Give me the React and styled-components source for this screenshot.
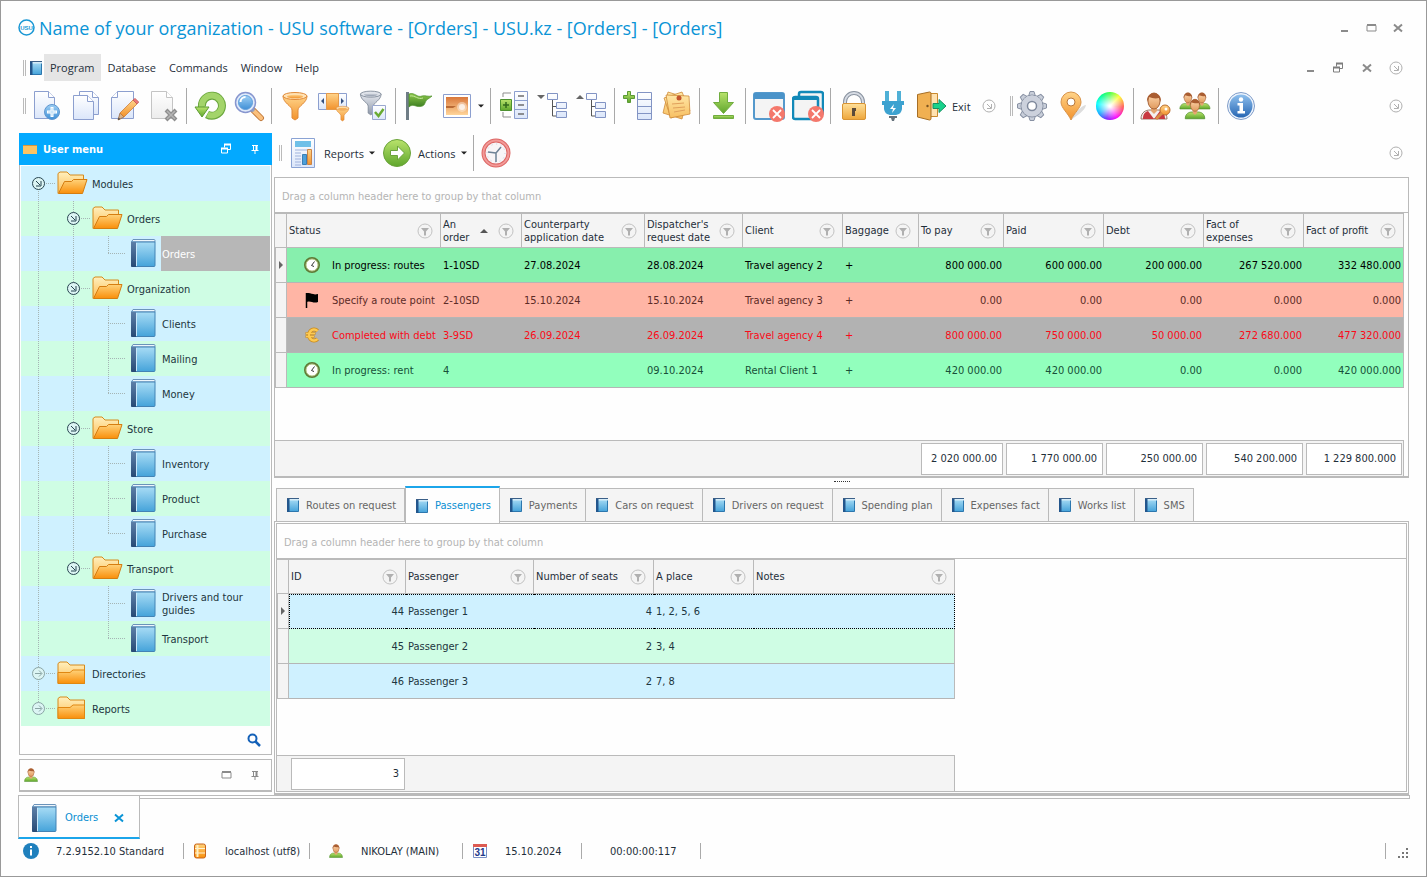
import { Fragment, useState } from "react";
import styled, { createGlobalStyle } from "styled-components";

const GlobalStyle = createGlobalStyle`
  *, *::before, *::after {
    box-sizing: border-box;
  }

  body {
    margin: 0;
    background: #fefefe;
    color: #1f2f3a;
    font-family: "DejaVu Sans Condensed", "DejaVu Sans", sans-serif;
    font-size: 11px;
    line-height: 13px;
  }

  button, input {
    margin: 0;
    padding: 0;
    border: 0;
    background: none;
    color: inherit;
    font: inherit;
  }

  svg {
    display: block;
    flex: none;
  }
`;

const uiFont = `"Open Sans", "Noto Sans", sans-serif`;
const line = "#bababa";

/* ---------- icons ---------- */

const GradientSheet = styled.svg`
  position: absolute;
  width: 0;
  height: 0;
`;

const gradients = {
  page: ["#ffffff", "#dbe6fa"],
  grayPage: ["#ffffff", "#ececec"],
  blue: ["#9fd0f5", "#3f8fd6"],
  book: ["#a8dcf5", "#45a3da"],
  spine: ["#5c7fa8", "#274a75"],
  green: ["#b9e36c", "#5fa62c"],
  darkGreen: ["#8fca4a", "#3c7d22"],
  orange: ["#ffd48a", "#f2922c"],
  folder: ["#ffd27a", "#f98f0a"],
  folderBack: ["#fff0bd", "#fdbd55"],
  gold: ["#ffe09a", "#eea63a"],
  note: ["#ffe6a5", "#f7bf62"],
  steel: ["#e6e9ef", "#8d97a8"],
  sunset: ["#d9773a", "#ffd59a"],
  skin: ["#ffd9b0", "#e09a5e"],
  info: ["#8fc0ee", "#2766b3"],
};

const Gradients = () => (
  <GradientSheet aria-hidden="true">
    <defs>
      {Object.entries(gradients).map(([id, [from, to]]) => (
        <linearGradient key={id} id={id} x1="0" y1="0" x2="0" y2="1">
          <stop offset="0" stopColor={from} />
          <stop offset="1" stopColor={to} />
        </linearGradient>
      ))}
    </defs>
  </GradientSheet>
);

const Icon = ({ size = 32, box = 32, children }) => (
  <svg
    width={size}
    height={size}
    viewBox={`0 0 ${box} ${box}`}
    fill="none"
    aria-hidden="true"
  >
    {children}
  </svg>
);

const IconNew = () => (
  <Icon>
    <path d="M3.500 1.500h14l6 6v21h-20z" fill="url(#page)" stroke="#8c9fcf" />
    <path d="M17.500 1.500v6h6" fill="#fff" stroke="#8c9fcf" />
    <circle cx="21" cy="22" r="7.500" fill="url(#blue)" stroke="#5f97d0" />
    <path d="M21 17v10M16 22h10" stroke="#fff" strokeWidth="3" />
    <path d="M21 18v8M17 22h8" stroke="#b8dcf6" strokeWidth="1" />
  </Icon>
);

const IconCopy = () => (
  <Icon>
    <path d="M9.500 1.500h13l6 6v17h-19z" fill="url(#page)" stroke="#8c9fcf" />
    <path d="M22.500 1.500v6h6" fill="#fff" stroke="#8c9fcf" />
    <path d="M3.500 5.500h14l6 6v18h-20z" fill="url(#page)" stroke="#8c9fcf" />
    <path d="M17.500 5.500v6h6" fill="#fff" stroke="#8c9fcf" />
  </Icon>
);

const IconEdit = () => (
  <Icon>
    <path d="M8.500 1.500h16v27h-22v-21z" fill="url(#page)" stroke="#8c9fcf" />
    <path d="M8.500 1.500v6h-6" fill="#fff" stroke="#8c9fcf" />
    <path d="M9 30l2-7 4 4z" fill="#d9b48a" stroke="#8d5a35" strokeWidth=".7" />
    <path d="M11 23l13-13 4 4-13 13z" fill="url(#orange)" stroke="#c8742c" strokeWidth=".7" />
    <path d="M24 10l2-1.600 3.800 3.600-1.800 2z" fill="#e77" stroke="#b55" strokeWidth=".7" />
    <path d="M9 30l.7-2.500 1.700 1.700z" fill="#444" />
  </Icon>
);

const IconDelete = () => (
  <Icon>
    <path d="M3.500 1.500h15l6 6v21h-21z" fill="url(#grayPage)" stroke="#c4c4c4" />
    <path d="M18.500 1.500v6h6" fill="#fff" stroke="#c4c4c4" />
    <path d="M18 20l10 10M28 20l-10 10" stroke="#8e8e8e" strokeWidth="4" />
    <path d="M19 21l8 8M27 21l-8 8" stroke="#b5b5b5" strokeWidth="1.500" />
  </Icon>
);

const IconRefresh = () => (
  <Icon>
    <path d="M8 17a10 10 0 1 1 5 7.500" stroke="#6aa63d" strokeWidth="8" />
    <path d="M8 17a10 10 0 1 1 5.500 7.500" stroke="#a3d46a" strokeWidth="6" />
    <path d="M1 17h14l-7 10z" fill="url(#green)" stroke="#5d9c33" />
  </Icon>
);

const IconSearch = () => (
  <Icon>
    <path d="M19 19l9 9" stroke="#c27b3c" strokeWidth="6" strokeLinecap="round" />
    <path d="M21 21l7 7" stroke="#fbc07c" strokeWidth="4" strokeLinecap="round" />
    <path d="M18 18l3 3" stroke="#999fb5" strokeWidth="4" />
    <circle cx="12.500" cy="12.500" r="10" fill="#dfeafa" stroke="#8796cf" strokeWidth="1.500" />
    <circle cx="12.500" cy="12.500" r="7" fill="url(#blue)" stroke="#5f9ddb" />
    <path d="M7.500 12a5 5 0 0 1 5-5" stroke="#fff" strokeWidth="2" />
  </Icon>
);

const Funnel = ({ fill, stroke, top }) => (
  <>
    <path d="M4 6c0 7 9 10 9 14v8l3 2 3-2v-8c0-4 9-7 9-14z" fill={fill} stroke={stroke} />
    <ellipse cx="16" cy="6" rx="12" ry="3.500" fill={top} stroke={stroke} />
    <ellipse cx="16" cy="6.500" rx="8" ry="1.800" fill={fill} />
  </>
);

const IconFunnel = () => (
  <Icon>
    <Funnel fill="url(#orange)" stroke="#e08a3a" top="#ffe2b5" />
  </Icon>
);

const IconColumnFilter = () => (
  <Icon>
    <path d="M.5 3.500h28v16h-28z" fill="url(#page)" stroke="#8c9fcf" />
    <path d="M8.500 3.500h12v16h-12z" fill="url(#orange)" stroke="#e59a4a" />
    <path d="M6 8v6l-3-3zM23 8v6l3-3z" fill="#35507f" />
    <g transform="translate(16 15) scale(.53)">
      <Funnel fill="url(#orange)" stroke="#d9822f" top="#ffe2b5" />
    </g>
  </Icon>
);

const IconFunnelCheck = () => (
  <Icon>
    <g transform="translate(0 -1) scale(.86)">
      <Funnel fill="url(#steel)" stroke="#7d8796" top="#dfe3ea" />
    </g>
    <path d="M15.500 15.500h13v14h-13z" fill="url(#page)" stroke="#9aa8cf" />
    <path d="M18 22l3.500 4 5-7" stroke="#69ab32" strokeWidth="2.500" />
  </Icon>
);

const IconFlag = () => (
  <Icon>
    <path d="M3 2h3v28h-3z" fill="#6f7d86" />
    <path d="M6 4c6-2 8 4 13 2 3-1 6 1 10 0-3 3-6 3-7 7-1 4-6 4-9 3-3-1-5-1-7 1z" fill="url(#darkGreen)" stroke="#4c8f2a" strokeWidth=".7" />
    <path d="M7 6c5-1 8 4 13 2" stroke="#c3e79a" />
  </Icon>
);

const IconPicture = () => (
  <Icon>
    <path d="M2.500 4.500h27v23h-27z" fill="#fff" stroke="#8c9fcf" />
    <path d="M5 7h22v18h-22z" fill="url(#sunset)" />
    <circle cx="21" cy="17" r="5" fill="#fff" opacity=".4" />
    <circle cx="21" cy="17" r="3" fill="#fff" opacity=".7" />
    <path d="M5 16h10l-3 2h-7z" fill="#a24d1b" opacity=".7" />
  </Icon>
);

const IconExpandList = () => (
  <Icon>
    <path d="M5 7v-4h8M5 22v5h8" stroke="#8d8d8d" />
    <path d="M16.500 1.500h13v27h-13zM16.500 10.500h13M16.500 19.500h13" fill="url(#page)" stroke="#8c9fcf" />
    <path d="M20 6h6M20 15h6M20 24h6" stroke="#6e6e6e" strokeWidth="1.500" />
    <path d="M2.500 9.500h11v11h-11z" fill="url(#green)" stroke="#4d9130" />
    <path d="M8 12v6M5 15h6" stroke="#32691c" strokeWidth="1.500" />
  </Icon>
);

const TreeBoxes = () => (
  <>
    <path d="M15.500 10v16h5M15.500 16.500h5" stroke="#555" />
    <path d="M10.500 3.500h10v6h-10zM19.500 12.500h10v6h-10zM19.500 21.500h10v6h-10z" fill="url(#page)" stroke="#8294c4" />
  </>
);

const IconTreeCollapse = () => (
  <Icon>
    <path d="M0 5h8l-4 4z" fill="#666" />
    <TreeBoxes />
  </Icon>
);

const IconTreeExpand = () => (
  <Icon>
    <path d="M0 9h8l-4-4z" fill="#666" />
    <TreeBoxes />
  </Icon>
);

const IconAddRows = () => (
  <Icon>
    <path d="M15.500 2.500h14v27h-14zM15.500 9.500h14M15.500 16.500h14M15.500 23.500h14" fill="url(#page)" stroke="#8294c4" />
    <path d="M5.500 1.500h3v4h4v3h-4v4h-3v-4h-4v-3h4z" fill="url(#green)" stroke="#5a9a35" />
  </Icon>
);

const IconNotes = () => (
  <Icon>
    <path d="M7 2l19 6-5 21-19-6z" fill="url(#note)" stroke="#cf8b3a" strokeWidth=".8" />
    <path d="M3 8l18-6 8 19-19 7z" fill="url(#note)" stroke="#cf8b3a" strokeWidth=".8" />
    <path d="M5 5l23 1 1 18-20 4z" fill="url(#note)" stroke="#cf8b3a" strokeWidth=".8" />
    <path d="M11 14l12-1M12 18l12-1M13 22l11-2" stroke="#e0a05c" />
    <circle cx="18" cy="8" r="2.500" fill="#c4532b" />
  </Icon>
);

const IconDownload = () => (
  <Icon>
    <path d="M12.500 2.500h8v10h6l-10 11-10-11h6z" fill="url(#green)" stroke="#71ad3f" />
    <path d="M6.500 25.500h20v3h-20z" fill="url(#green)" stroke="#71ad3f" />
  </Icon>
);

const CloseBadge = () => (
  <>
    <circle cx="24" cy="24" r="8" fill="#f4786c" />
    <path d="M20 20l8 8M28 20l-8 8" stroke="#fff" strokeWidth="1.800" />
  </>
);

const IconCloseWindow = () => (
  <Icon>
    <rect x="1" y="3" width="30" height="26" rx="2" fill="#f4f4f4" stroke="#5599cc" strokeWidth="2" />
    <path d="M1 3h30v6h-30z" fill="#4a93c9" />
    <CloseBadge />
  </Icon>
);

const IconCloseAll = () => (
  <Icon>
    <rect x="7" y="2" width="24" height="22" rx="2" fill="#f4f4f4" stroke="#1289b8" strokeWidth="2.500" />
    <rect x="1" y="7" width="25" height="22" rx="2" fill="#f4f4f4" stroke="#1289b8" strokeWidth="2.500" />
    <path d="M1 7h25v3h-25z" fill="#1289b8" />
    <CloseBadge />
  </Icon>
);

const IconLock = () => (
  <Icon>
    <path d="M7 16v-4a9 9 0 0 1 18 0v4" stroke="#8a93a0" strokeWidth="4" />
    <path d="M7 16v-4a9 9 0 0 1 18 0v4" stroke="#d7dce4" strokeWidth="2" />
    <rect x="4.500" y="13.500" width="23" height="16" rx="1.500" fill="url(#gold)" stroke="#d89434" />
    <path d="M14 18h4v3h-1v5h-3v-5z" fill="#5b4a3a" />
  </Icon>
);

const IconPlug = () => (
  <Icon>
    <path d="M10 1v10M22 1v10" stroke="#4fb0d6" strokeWidth="4" />
    <path d="M5 11h22v4h-2v4a7 7 0 0 1-6 6h-6a7 7 0 0 1-6-6v-4h-2z" fill="#3da2d0" />
    <path d="M17 14l-4 5h3l-1 4 4-5h-3z" fill="#fff" />
    <path d="M12 26h8v2h-2l-1 3h-2l-1-3h-2z" fill="#66727c" />
  </Icon>
);

const IconExit = () => (
  <Icon>
    <path d="M13.500 3.500h9v23h-9z" fill="#ffe2b0" stroke="#c98a2e" />
    <path d="M2.500 4.500l12-2.500q1.500 0 1.500 1.500v25q0 1.500-1.500 1.500l-12-3z" fill="#f0b052" stroke="#a66e25" />
    <circle cx="12.500" cy="16" r="1.200" fill="#7a5320" />
    <path d="M18 13.500h6v-4l7 6.500-7 6.500v-4h-6z" fill="#18d28c" stroke="#178f62" />
  </Icon>
);

const gearTeeth = [0, 45, 90, 135, 180, 225, 270, 315];

const IconGear = () => (
  <Icon>
    {gearTeeth.map((angle) => (
      <path
        key={angle}
        d="M12.500 6.500l1.500-5h4l1.500 5z"
        fill="#c9cfda"
        stroke="#8891a3"
        transform={`rotate(${angle} 16 16)`}
      />
    ))}
    <circle cx="16" cy="16" r="11" fill="url(#steel)" stroke="#8891a3" />
    <circle cx="16" cy="16" r="10.500" fill="#ccd1dc" />
    <circle cx="16" cy="16" r="4.500" fill="#fff" stroke="#7f899c" strokeWidth="1.500" />
  </Icon>
);

const IconPin = () => (
  <Icon>
    <path d="M16 30c6-5 14-9 15-15-3 0-10 6-15 15z" fill="#ddd" />
    <path d="M16 30c-3-7-10-12-10-18a10 10 0 0 1 20 0c0 6-7 11-10 18z" fill="url(#orange)" stroke="#d8934a" />
    <circle cx="16" cy="12" r="4" fill="#fff" stroke="#b9793c" />
  </Icon>
);

const Person = ({ body = "url(#green)", line: stroke = "#4f8f2c" }) => (
  <>
    <path d="M3 29c0-7 5-9 9-9h8c4 0 9 2 9 9z" fill={body} stroke={stroke} />
    <path d="M13 16h6v5l-3 3-3-3z" fill="#e5a671" />
    <ellipse cx="16" cy="11" rx="6" ry="8" fill="url(#skin)" stroke="#a8653a" />
    <path d="M9 12c-1-12 15-12 14 0l-2-4c-4 1-7 0-10-1z" fill="#a95d31" />
  </>
);

const IconUserKey = () => (
  <Icon>
    <g transform="translate(-2 0)">
      <Person body="#f4f0ee" line="#9a7a6a" />
      <path d="M5 29c0-5 2-7 5-8l6 8zM27 29c0-5-2-7-5-8l-6 8z" fill="#c8393f" />
    </g>
    <circle cx="25" cy="20" r="5" fill="url(#orange)" stroke="#b96c2c" />
    <circle cx="26" cy="19" r="1.500" fill="#fff" />
    <path d="M22 23l-6 6" stroke="#d98d45" strokeWidth="3" />
  </Icon>
);

const IconUsers = () => (
  <Icon>
    <g transform="translate(-1 1) scale(.62)">
      <Person />
    </g>
    <g transform="translate(13 1) scale(.62)">
      <Person />
    </g>
    <g transform="translate(4 7) scale(.75)">
      <Person />
    </g>
  </Icon>
);

const IconInfo = () => (
  <Icon>
    <circle cx="16" cy="16" r="13.500" fill="#eef4fc" stroke="#7e9cc9" />
    <circle cx="16" cy="16" r="11.500" fill="url(#info)" />
    <circle cx="16" cy="9.500" r="2.200" fill="#fff" />
    <path d="M12.500 13h5.500v8h2v2.500h-7.500v-2.500h2v-5.500h-2z" fill="#fff" />
  </Icon>
);

const IconReport = () => (
  <Icon>
    <path d="M4.500 1.500h23v29h-23z" fill="url(#page)" stroke="#8aa3d4" />
    <path d="M8 4h16v6h-16z" fill="#6fc0e8" />
    <path d="M8 13h16M8 16h6M8 19h6M8 22h6M8 25h6M8 28h6" stroke="#9fb2dc" />
    <path d="M15.500 17.500h4v10h-4z" fill="#4d9fd8" stroke="#3b7fb5" />
    <path d="M20.500 12.500h4v15h-4z" fill="url(#orange)" stroke="#cc8444" />
  </Icon>
);

const IconAction = () => (
  <Icon>
    <circle cx="16" cy="16" r="13.500" fill="url(#green)" stroke="#6ba33b" />
    <path d="M9.500 13.500h7v-4.500l7 7-7 7v-4.500h-7z" fill="#fff" stroke="#6ba33b" />
  </Icon>
);

const IconAlarm = () => (
  <Icon>
    <circle cx="16" cy="16" r="12.500" fill="#f8f5f7" stroke="#dc6664" strokeWidth="4" />
    <circle cx="16" cy="16" r="12.500" stroke="#f29a98" strokeWidth="2" />
    <circle cx="16" cy="16" r="9" stroke="#c5cddd" strokeDasharray="1 3.700" />
    <path d="M16 16l5-6M16 16v9M16 16l-8-1" stroke="#6e8296" strokeWidth="1.500" />
  </Icon>
);

const IconBook = () => (
  <Icon size={28} box={28}>
    <path d="M2.500 3l1.500-2.500h21q1 0 1 1v1.500z" fill="#eef6fc" stroke="#6b93ba" />
    <path d="M2.500 3h23.500v23.500q0 1-1 1h-21.500q-1 0-1-1z" fill="url(#book)" stroke="#4383b5" />
    <path d="M2 3h5v25h-4q-1 0-1-1z" fill="url(#spine)" />
    <path d="M7.500 4v23" stroke="#c8e8fa" />
  </Icon>
);

const IconSmallBook = () => (
  <Icon size={14} box={14}>
    <path d="M1.500 1h11v12.500h-11z" fill="url(#book)" stroke="#2c77ae" />
    <path d="M1 1h12v1.500h-12z" fill="#d5ecf8" />
    <path d="M1 .5h2.500v13.500h-2.500z" fill="#23568c" />
    <path d="M1 .5h12" stroke="#3a5f88" />
  </Icon>
);

const IconFolder = ({ open }) => (
  <svg width="31" height="24" viewBox="0 0 31 24" fill="none" aria-hidden="true">
    {open ? (
      <>
        <path d="M1 22.500v-20l2-1.500h7l3 3h13.500v7" fill="url(#folderBack)" stroke="#d58a1c" />
        <path d="M1.500 22.500l6-12h7l2-2h13.500l-4.500 14z" fill="url(#folder)" stroke="#d57d10" />
      </>
    ) : (
      <>
        <path d="M1 22.500v-20l2-1.500h7l3 3h14.500v18.500z" fill="url(#folderBack)" stroke="#d58a1c" />
        <path d="M1 22.500v-11l12 0 3-2.500h11.500v13.500z" fill="url(#folder)" stroke="#e08712" />
      </>
    )}
  </svg>
);

const IconCircleArrow = ({ color = "#b0b0b0" }) => (
  <Icon size={14} box={14}>
    <circle cx="7" cy="7" r="6" stroke={color} />
    <path d="M5 5l4 4M9.500 5v4.500h-4.500" stroke={color} />
  </Icon>
);

const IconFilter = () => (
  <Icon size={16} box={16}>
    <circle cx="8" cy="8" r="7" stroke="#c2c2c2" />
    <path d="M4 5h8l-3 3.500v4h-2v-4z" fill="#b0b0b0" />
  </Icon>
);

const IconMinimize = () => (
  <Icon size={12} box={12}>
    <path d="M3 9h7" stroke="#8b8b8b" strokeWidth="2" />
  </Icon>
);

const IconMaximize = () => (
  <Icon size={12} box={12}>
    <path d="M2 3.500h9v5.500h-9z" stroke="#8b8b8b" />
    <path d="M2 3h9" stroke="#8b8b8b" strokeWidth="2" />
  </Icon>
);

const IconRestore = ({ color = "#7d7d7d" }) => (
  <Icon size={12} box={12}>
    <path d="M4.500 4.500v-3h6v5h-3M1.500 5.500h6v4.500h-6z" stroke={color} />
    <path d="M4 1.500h7M1 5.500h7" stroke={color} strokeWidth="2" />
  </Icon>
);

const IconClose = ({ color = "#8b8b8b" }) => (
  <Icon size={12} box={12}>
    <path d="M2 2.500l8 7M10 2.500l-8 7" stroke={color} strokeWidth="2" />
  </Icon>
);

const IconPushpin = ({ color = "#8b8b8b" }) => (
  <Icon size={12} box={12}>
    <path d="M3 2.500h6M2.500 7.500h7M6 8v3M4.500 3v4" stroke={color} />
    <path d="M7.500 2.500v5" stroke={color} strokeWidth="2" />
  </Icon>
);

const IconCaret = () => (
  <Icon size={6} box={6}>
    <path d="M0 1.500h6l-3 3z" fill="#222" />
  </Icon>
);

const IconClockStatus = () => (
  <Icon size={16} box={16}>
    <circle cx="8" cy="8" r="7" fill="#fff" stroke="#5f7a36" strokeWidth="2" />
    <circle cx="8" cy="8" r="6" stroke="#b4c987" />
    <path d="M10.500 4.500l-3 4 2.500 1" stroke="#333" />
  </Icon>
);

const IconFlagStatus = () => (
  <Icon size={16} box={16}>
    <path d="M2.500 1v15" stroke="#000" strokeWidth="1.500" />
    <path d="M2 1.500c5-1.500 6 2 12 .5v8c-5 2-7-2-12 0z" fill="#000" />
  </Icon>
);

const IconEuroStatus = () => (
  <Icon size={16} box={16}>
    <path d="M13.500 4a5 5.500 0 1 0 0 8" stroke="#c98a1c" strokeWidth="4" />
    <path d="M1.500 6.500h10M1.500 9.500h9" stroke="#c98a1c" strokeWidth="2.500" />
    <path d="M13.500 4a5 5.500 0 1 0 0 8" stroke="#fdca52" strokeWidth="2.500" />
    <path d="M2 6.500h9M2 9.500h8" stroke="#fdca52" strokeWidth="1.500" />
  </Icon>
);

const IconPerson = () => (
  <Icon size={16}>
    <Person />
  </Icon>
);

const IconDatabase = () => (
  <Icon size={16} box={16}>
    <rect x="2.500" y="1" width="11" height="14" rx="2" fill="url(#folder)" stroke="#c8641c" />
    <path d="M3 5.500h10M3 10h10" stroke="#fff3d8" />
    <path d="M5.500 2v12" stroke="#fff0c4" strokeWidth="2" />
  </Icon>
);

const IconCalendar = () => (
  <Icon size={16} box={16}>
    <path d="M1.500 1.500h13v13h-13z" fill="#fff" stroke="#7a8fc4" />
    <path d="M1 1h14v3h-14z" fill="#dd5b52" />
    <text x="8" y="13" textAnchor="middle" fontFamily="Liberation Sans" fontSize="10" fontWeight="700" fill="#23398a">
      31
    </text>
  </Icon>
);

const IconInfoDot = () => (
  <Icon size={16} box={16}>
    <circle cx="8" cy="8" r="8" fill="#1f80bd" />
    <path d="M8 3v2M8 6.500v6" stroke="#fff" strokeWidth="2" />
  </Icon>
);

const IconFind = () => (
  <Icon size={14} box={14}>
    <circle cx="5.500" cy="5.500" r="4" stroke="#1461b8" strokeWidth="2" />
    <path d="M8.500 8.500l4.500 4.500" stroke="#1461b8" strokeWidth="2.500" />
  </Icon>
);

const Logo = () => (
  <Icon size={17} box={17}>
    <circle cx="8.500" cy="8.500" r="7.500" stroke="#1a97d4" strokeWidth="1.500" />
    <text x="8.500" y="11" textAnchor="middle" fontFamily="Liberation Sans" fontSize="6" fontWeight="700" fill="#1a97d4">
      USU
    </text>
  </Icon>
);

/* ---------- window frame ---------- */

const AppWindow = styled.div`
  display: flex;
  flex-direction: column;
  min-height: 100vh;
  padding: 0 17px 13px;
  border: 1px solid #999;
`;

const TitleBar = styled.header`
  display: flex;
  align-items: center;
  gap: 4px;
  height: 53px;
`;

const Title = styled.h1`
  flex: 1;
  margin: 0;
  color: #0a94d6;
  font-family: ${uiFont};
  font-size: 18px;
  font-weight: 400;
  line-height: 24px;
  white-space: nowrap;
`;

const IconButton = styled.button`
  display: flex;
  justify-content: center;
  align-items: center;
  width: ${({ $width }) => $width || 27}px;
  height: 24px;
`;

const MenuBar = styled.nav`
  display: flex;
  align-items: center;
  gap: 1px;
  height: 27px;
`;

const Grip = styled.span`
  flex: none;
  width: 3px;
  height: ${({ $tall }) => ($tall ? 20 : 16)}px;
  margin: 0 ${({ $after }) => $after || 0}px 0 5px;
  border: solid ${line};
  border-width: 0 1px;
`;

const MenuItem = styled.button`
  height: 27px;
  padding: 0 6px;
  background: ${({ $active }) => ($active ? "#e5e5e5" : "none")};
  font-family: ${uiFont};
  font-size: 11px;
`;

const Spacer = styled.span`
  flex: 1;
`;

const MenuBook = styled.span`
  display: flex;
  padding-left: 2px;
`;

/* ---------- toolbars ---------- */

const ToolBar = styled.div`
  display: flex;
  align-items: center;
  height: ${({ $compact }) => ($compact ? 40 : 50)}px;
  margin-bottom: ${({ $compact }) => ($compact ? 4 : 0)}px;
`;

const ToolButton = styled.button`
  display: flex;
  flex: none;
  justify-content: center;
  align-items: center;
  gap: 5px;
  min-width: 39px;
  height: 38px;
  padding: 0 3px;
  font-family: ${uiFont};
  font-size: 11px;
`;

const ToolLine = styled.span`
  flex: none;
  width: 1px;
  height: 36px;
  margin: 0 3px;
  background: #a9a9a9;
`;

const ColorWheel = styled.span`
  width: 28px;
  height: 28px;
  border-radius: 50%;
  background: radial-gradient(#fff 5%, transparent 70%),
    conic-gradient(#4f4, #ff3 45deg, #f55 95deg, #f0f 150deg, #72f 195deg, #1af 235deg, #0ff 280deg, #0f8 325deg, #4f4);
`;

/* ---------- layout ---------- */

const Body = styled.main`
  display: grid;
  flex: 1;
  grid-template-columns: 253px minmax(0, 1fr);
  gap: 2px;
  padding: 2px 0 0 1px;
`;

const SideColumn = styled.aside`
  display: flex;
  flex-direction: column;
  gap: 4px;
  padding-bottom: 3px;
`;

const Content = styled.section`
  display: flex;
  flex-direction: column;
  min-width: 0;
`;

/* ---------- side menu ---------- */

const SidePanel = styled.div`
  display: flex;
  flex: ${({ $grow }) => ($grow ? 1 : "none")};
  flex-direction: column;
  border: 1px solid ${line};
  border-top-width: ${({ $grow }) => ($grow ? 0 : 1)}px;
`;

const SideHeader = styled.div`
  display: flex;
  align-items: center;
  height: 32px;
  margin: 0 -1px 1px;
  padding: 0 3px 0 4px;
  background: #03a9ff;
  color: #fff;
`;

const SideTitle = styled.h2`
  flex: 1;
  margin: 0 0 0 6px;
  font-size: 11px;
  font-weight: 700;
`;

const FolderChip = styled.span`
  width: 14px;
  height: 9px;
  border-top: 1px solid #d8963c;
  background: #fcc463;
`;

const TreeList = styled.ul`
  margin: 0;
  padding: 0 1px;
  list-style: none;
`;

const TreeRow = styled.li`
  display: flex;
  height: 35px;
  background: #cff1ff;

  &:nth-child(even) {
    background: #cffde4;
  }
`;

const TreeSlot = styled.span`
  display: flex;
  flex: none;
  justify-content: center;
  align-items: center;
  width: 35px;
  padding: 0 2px 2px 0;
`;

const TreeLabel = styled.button`
  flex: 1;
  padding: 1px 1px 0;
  background: ${({ $selected }) => ($selected ? "#b7b7b7" : "none")};
  color: ${({ $selected }) => ($selected ? "#fff" : "#1d3640")};
  text-align: left;
  white-space: pre-line;
`;

const SearchRow = styled.div`
  display: flex;
  justify-content: flex-end;
  align-items: center;
  flex: 1;
  min-height: 27px;
  padding-right: 4px;
`;

const UserBar = styled.div`
  display: flex;
  align-items: center;
  height: 31px;
  padding: 0 2px 0 3px;
  border-bottom: 1px solid ${line};
`;

const TreeGuide = ({ toggle, above, below, branch }) => (
  <svg width="35" height="35" viewBox="0 0 35 35" fill="none" aria-hidden="true">
    {above && <path d="M17.500 0v17" stroke="#a5b5b5" strokeDasharray="1 1" />}
    {below && <path d="M17.500 17v18" stroke="#a5b5b5" strokeDasharray="1 1" />}
    {branch && <path d="M17 17.500h18" stroke="#a5b5b5" strokeDasharray="1 1" />}
    {toggle && (
      <g stroke={toggle === "open" ? "#274550" : "#8aa5a5"} transform="translate(17.500 17.500)">
        <circle r="6" fill="#dcf5f4" />
        {toggle === "open" ? (
          <path d="M-2.500 -2.500l4 4M2.500 -2.500v5h-5" />
        ) : (
          <path d="M-3.500 0h6.500M.5 -3l3 3-3 3" />
        )}
      </g>
    )}
  </svg>
);

const menuTree = [
  {
    label: "Modules",
    children: [
      { label: "Orders", children: [{ label: "Orders" }] },
      {
        label: "Organization",
        children: [{ label: "Clients" }, { label: "Mailing" }, { label: "Money" }],
      },
      {
        label: "Store",
        children: [{ label: "Inventory" }, { label: "Product" }, { label: "Purchase" }],
      },
      {
        label: "Transport",
        children: [{ label: "Drivers and tour\nguides" }, { label: "Transport" }],
      },
    ],
  },
  { label: "Directories", closed: true },
  { label: "Reports", closed: true },
];

// flattens the tree; trail says for each parent whether more siblings follow it
function flattenTree(nodes, trail = []) {
  return nodes.flatMap((node, i) => {
    const last = i === nodes.length - 1;
    const row = { ...node, trail, last, first: i === 0 };
    return [row, ...flattenTree(node.children || [], [...trail, !last])];
  });
}

const SideMenu = () => {
  const [selected, setSelected] = useState(2);

  return (
    <SideColumn>
      <SidePanel $grow>
        <SideHeader>
          <FolderChip />
          <SideTitle>User menu</SideTitle>
          <IconButton $width={29} aria-label="Float panel">
            <IconRestore color="#fff" />
          </IconButton>
          <IconButton $width={29} aria-label="Pin panel">
            <IconPushpin color="#fff" />
          </IconButton>
        </SideHeader>
        <TreeList>
          {flattenTree(menuTree).map((row, i) => {
            const folder = row.children || row.closed;
            return (
              <TreeRow key={i}>
                {row.trail.map((more, level) => (
                  <TreeGuide key={level} above={more} below={more} />
                ))}
                <TreeGuide
                  branch
                  above={row.trail.length > 0 || !row.first}
                  below={!row.last}
                  toggle={folder && (row.closed ? "closed" : "open")}
                />
                <TreeSlot>{folder ? <IconFolder open={!row.closed} /> : <IconBook />}</TreeSlot>
                <TreeLabel $selected={i === selected} onClick={() => setSelected(i)}>
                  {row.label}
                </TreeLabel>
              </TreeRow>
            );
          })}
        </TreeList>
        <SearchRow>
          <IconButton aria-label="Search menu">
            <IconFind />
          </IconButton>
        </SearchRow>
      </SidePanel>
      <SidePanel>
        <UserBar>
          <IconPerson />
          <Spacer />
          <IconButton $width={29} aria-label="Maximize panel">
            <IconMaximize />
          </IconButton>
          <IconButton $width={29} aria-label="Pin user panel">
            <IconPushpin />
          </IconButton>
        </UserBar>
      </SidePanel>
    </SideColumn>
  );
};

/* ---------- grids ---------- */

const GridPanel = styled.div`
  display: flex;
  flex-direction: column;
  flex: none;
  border: 1px solid ${line};
  border-bottom-width: 2px;
`;

const GroupHint = styled.p`
  height: 35px;
  margin: 0;
  padding: 12px 7px 0;
  border-bottom: 1px solid ${line};
  color: #b4b4b4;
`;

const Table = styled.table`
  width: ${({ $width }) => $width || "100%"};
  table-layout: fixed;
  border-collapse: separate;
  border-spacing: 0;
`;

const TableArea = styled.div`
  margin: 0 ${({ $inset }) => ($inset ? 4 : 0)}px 0 0;
`;

const Th = styled.th`
  height: 35px;
  padding: 0 7px 0 2px;
  border: solid ${line};
  border-width: 1px 1px 1px 0;
  background: #f4f4f4;
  font-weight: 400;
  text-align: left;
  white-space: pre-line;
`;

const ThInner = styled.div`
  display: flex;
  align-items: center;
  justify-content: space-between;
`;

const Tr = styled.tr`
  background: ${({ $bg }) => $bg};
  color: ${({ $color }) => $color};
`;

const Td = styled.td`
  height: 35px;
  padding: 0 2px;
  border-bottom: 1px solid #b5b5b5;
  text-align: ${({ $right }) => ($right ? "right" : "left")};
  white-space: nowrap;

  &:last-child {
    border-right: 1px solid ${line};
  }

  ${({ $focus }) =>
    $focus &&
    `
    border-top: 1px dotted #000;
    border-bottom: 1px dotted #000;
    &:last-child { border-right: 1px dotted #000; }
    &:nth-child(2) { border-left: 1px dotted #000; }
  `}
`;

const RowMark = styled.td`
  height: 35px;
  padding: 0 0 0 3px;
  border: solid ${line};
  border-width: 0 1px 1px;
  background: #f4f4f4;
`;

const StatusCell = styled.div`
  display: flex;
  align-items: center;
  gap: 12px;
  padding-left: 15px;
`;

const Gap = styled.div`
  flex: 1;
  min-height: ${({ $height }) => $height}px;
`;

const FootCell = styled.td`
  height: 36px;
  padding: 0 1px 0 2px;
  border-top: 1px solid ${line};
  background: #f4f4f4;

  &:last-child {
    border-right: 1px solid ${line};
  }
`;

const Total = styled.output`
  display: flex;
  justify-content: flex-end;
  align-items: center;
  height: 32px;
  padding: 0 5px;
  border: 1px solid ${line};
  background: #fff;
`;

const Pointer = () => (
  <svg width="5" height="8" viewBox="0 0 5 8" aria-hidden="true">
    <path d="M0 0l4 4-4 4z" fill="#666" />
  </svg>
);

const SortMark = () => (
  <svg width="8" height="5" viewBox="0 0 8 5" aria-hidden="true">
    <path d="M0 5l4-4 4 4z" fill="#555" />
  </svg>
);

const Cols = ({ widths }) => (
  <colgroup>
    {widths.map((width, i) => (
      <col key={i} width={width} />
    ))}
  </colgroup>
);

const HeadRow = ({ columns, sorted }) => (
  <thead>
    <tr>
      <Th as="td" />
      {columns.map((name) => (
        <Th key={name} scope="col">
          <ThInner>
            <span>{name}</span>
            {name === sorted && <SortMark />}
            <IconFilter />
          </ThInner>
        </Th>
      ))}
    </tr>
  </thead>
);

const orderWidths = [12, 154, 81, 123, 98, 100, 76, 85, 100, 100, 100, 100];

const orderColumns = [
  "Status",
  "An\norder",
  "Counterparty\napplication date",
  "Dispatcher's\nrequest date",
  "Client",
  "Baggage",
  "To pay",
  "Paid",
  "Debt",
  "Fact of\nexpenses",
  "Fact of profit",
];

const orders = [
  {
    icon: <IconClockStatus />,
    bg: "#87efad",
    color: "#000",
    cells: ["In progress: routes", "1-10SD", "27.08.2024", "28.08.2024", "Travel agency 2", "+", "800 000.00", "600 000.00", "200 000.00", "267 520.000", "332 480.000"],
  },
  {
    icon: <IconFlagStatus />,
    bg: "#ffb5a5",
    color: "#5c2a26",
    cells: ["Specify a route point", "2-10SD", "15.10.2024", "15.10.2024", "Travel agency 3", "+", "0.00", "0.00", "0.00", "0.000", "0.000"],
  },
  {
    icon: <IconEuroStatus />,
    bg: "#b2b2b2",
    color: "#fa0a18",
    cells: ["Completed with debt", "3-9SD", "26.09.2024", "26.09.2024", "Travel agency 4", "+", "800 000.00", "750 000.00", "50 000.00", "272 680.000", "477 320.000"],
  },
  {
    icon: <IconClockStatus />,
    bg: "#92ffbd",
    color: "#174f38",
    cells: ["In progress: rent", "4", "", "09.10.2024", "Rental Client 1", "+", "420 000.00", "420 000.00", "0.00", "0.000", "420 000.000"],
  },
];

const totals = ["2 020 000.00", "1 770 000.00", "250 000.00", "540 200.000", "1 229 800.000"];

const OrdersGrid = () => (
  <GridPanel>
    <GroupHint>Drag a column header here to group by that column</GroupHint>
    <TableArea $inset>
      <Table>
        <Cols widths={orderWidths} />
        <HeadRow columns={orderColumns} sorted={"An\norder"} />
        <tbody>
          {orders.map((order, i) => (
            <Tr key={i} $bg={order.bg} $color={order.color}>
              <RowMark>{i === 0 && <Pointer />}</RowMark>
              {order.cells.map((cell, col) => (
                <Td key={col} $right={col > 5}>
                  {col === 0 ? (
                    <StatusCell>
                      {order.icon}
                      {cell}
                    </StatusCell>
                  ) : (
                    cell
                  )}
                </Td>
              ))}
            </Tr>
          ))}
        </tbody>
      </Table>
    </TableArea>
    <Gap $height={52} />
    <TableArea $inset>
      <Table>
        <Cols widths={orderWidths} />
        <tbody>
          <tr>
            <FootCell colSpan={7} />
            {totals.map((total) => (
              <FootCell key={total}>
                <Total>{total}</Total>
              </FootCell>
            ))}
          </tr>
        </tbody>
      </Table>
    </TableArea>
  </GridPanel>
);

const passengerWidths = [12, 117, 128, 120, 100, 201];

const passengers = [
  { id: 44, name: "Passenger 1", seats: 4, place: "1, 2, 5, 6", bg: "#cff1ff" },
  { id: 45, name: "Passenger 2", seats: 2, place: "3, 4", bg: "#cffde4" },
  { id: 46, name: "Passenger 3", seats: 2, place: "7, 8", bg: "#cff1ff" },
];

const PassengersGrid = () => (
  <>
    <GroupHint>Drag a column header here to group by that column</GroupHint>
    <TableArea>
      <Table $width="678px">
        <Cols widths={passengerWidths} />
        <HeadRow columns={["ID", "Passenger", "Number of seats", "A place", "Notes"]} />
        <tbody>
          {passengers.map((row, i) => (
            <Tr key={row.id} $bg={row.bg} $color="#1d3640">
              <RowMark>{i === 0 && <Pointer />}</RowMark>
              <Td $right $focus={i === 0}>{row.id}</Td>
              <Td $focus={i === 0}>{row.name}</Td>
              <Td $right $focus={i === 0}>{row.seats}</Td>
              <Td $focus={i === 0}>{row.place}</Td>
              <Td $focus={i === 0} />
            </Tr>
          ))}
        </tbody>
      </Table>
    </TableArea>
    <Gap $height={40} />
    <TableArea>
      <Table $width="678px">
        <Cols widths={passengerWidths} />
        <tbody>
          <tr>
            <FootCell />
            <FootCell>
              <Total>3</Total>
            </FootCell>
            <FootCell colSpan={4} />
          </tr>
        </tbody>
      </Table>
    </TableArea>
  </>
);

/* ---------- detail tabs ---------- */

const Splitter = styled.div`
  display: flex;
  justify-content: center;
  height: 8px;
  padding-top: 3px;

  &::after {
    content: "";
    width: 16px;
    border-top: 1px dotted #333;
  }
`;

const TabStrip = styled.div`
  display: flex;
  align-items: flex-end;
  padding: 0 2px;
  height: 35px;
`;

const Tab = styled.button`
  display: flex;
  align-items: center;
  gap: 6px;
  height: ${({ $active }) => ($active ? 37 : 33)}px;
  margin-bottom: ${({ $active }) => ($active ? -2 : 0)}px;
  padding: 0 8px 0 9px;
  border: solid ${line};
  border-width: ${({ $active }) => ($active ? "2px 1px 0" : "1px 1px 0 0")};
  border-top-color: ${({ $active }) => ($active ? "#1ba5ea" : line)};
  background: ${({ $active }) => ($active ? "#fefefe" : "#f4f4f4")};
  color: ${({ $active }) => ($active ? "#0a8fd2" : "#666")};
  white-space: nowrap;
  z-index: ${({ $active }) => ($active ? 1 : 0)};

  &:first-child {
    border-left-width: 1px;
  }
`;

const DetailPanel = styled.div`
  display: flex;
  flex: 1;
  padding: 1px;
  border: 1px solid ${line};
  border-bottom-width: 2px;
`;

const DetailInner = styled.div`
  display: flex;
  flex: 1;
  flex-direction: column;
  min-width: 0;
  border: 1px solid ${line};
`;

const detailTabs = [
  "Routes on request",
  "Passengers",
  "Payments",
  "Cars on request",
  "Drivers on request",
  "Spending plan",
  "Expenses fact",
  "Works list",
  "SMS",
];

/* ---------- bottom ---------- */

const DockStrip = styled.div`
  display: flex;
  height: 44px;
  border-top: 1px solid ${line};
  margin-right: -1px;
`;

const DockTab = styled.div`
  display: flex;
  align-items: center;
  gap: 7px;
  width: 122px;
  padding: 2px 4px 0 11px;
  border: 1px solid ${line};
  border-width: 0 1px 2px;
  border-bottom-color: #1ba5ea;
  color: #0a8fd2;
`;

const DockLine = styled.div`
  flex: 1;
  height: 3px;
  border: solid ${line};
  border-width: 0 1px 1px 0;
`;

const StatusBar = styled.footer`
  display: grid;
  grid-template-columns: 166px 126px 153px 119px 119px 1fr auto;
  align-items: center;
  height: 24px;
`;

const StatusItem = styled.div`
  display: flex;
  align-items: center;
  gap: 17px;
  height: 16px;
  padding-left: ${({ $pad }) => $pad}px;
  border-right: 1px solid #aaa;
`;

const SizeGrip = styled.div`
  display: flex;
  padding: 5px 0 0 12px;
  border-left: 1px solid #aaa;
`;

/* ---------- page ---------- */

const toolGroups = [
  [["New", IconNew], ["Copy", IconCopy], ["Edit", IconEdit], ["Delete", IconDelete]],
  [["Refresh", IconRefresh], ["Search", IconSearch]],
  [["Filter", IconFunnel], ["Filter by column", IconColumnFilter], ["Apply filter", IconFunnelCheck]],
  [["Mark", IconFlag], ["Picture", IconPicture, true]],
  [["Expand list", IconExpandList], ["Collapse tree", IconTreeCollapse], ["Expand tree", IconTreeExpand]],
  [["Add rows", IconAddRows], ["Notes", IconNotes]],
  [["Download", IconDownload]],
  [["Close window", IconCloseWindow], ["Close all windows", IconCloseAll]],
  [["Lock", IconLock], ["Connection", IconPlug]],
];

const App = () => {
  const [tab, setTab] = useState("Passengers");

  return (
    <AppWindow>
      <GlobalStyle />
      <Gradients />
      <TitleBar>
        <Logo />
        <Title>Name of your organization - USU software - [Orders] - USU.kz - [Orders] - [Orders]</Title>
        <IconButton $width={23} aria-label="Minimize"><IconMinimize /></IconButton>
        <IconButton $width={23} aria-label="Maximize"><IconMaximize /></IconButton>
        <IconButton $width={23} aria-label="Close"><IconClose /></IconButton>
      </TitleBar>

      <MenuBar>
        <Grip />
        <MenuBook><IconSmallBook /></MenuBook>
        {["Program", "Database", "Commands", "Window", "Help"].map((name) => (
          <MenuItem key={name} $active={name === "Program"}>{name}</MenuItem>
        ))}
        <Spacer />
        <IconButton aria-label="Minimize document"><IconMinimize /></IconButton>
        <IconButton aria-label="Restore document"><IconRestore /></IconButton>
        <IconButton $width={29} aria-label="Close document"><IconClose /></IconButton>
        <IconButton aria-label="Menu options"><IconCircleArrow /></IconButton>
      </MenuBar>

      <ToolBar>
        <Grip $after={1} />
        {toolGroups.map((group, i) => (
          <Fragment key={i}>
            {group.map(([name, Glyph, drop]) => (
              <ToolButton key={name} aria-label={name}>
                <Glyph />
                {drop && <IconCaret />}
              </ToolButton>
            ))}
            {i < toolGroups.length - 1 && <ToolLine />}
          </Fragment>
        ))}
        <ToolButton>
          <IconExit />
          Exit
        </ToolButton>
        <IconButton $width={31} aria-label="Toolbar options"><IconCircleArrow /></IconButton>
        <Grip $tall />
        <ToolButton aria-label="Settings"><IconGear /></ToolButton>
        <ToolButton aria-label="Places"><IconPin /></ToolButton>
        <ToolButton aria-label="Colors"><ColorWheel /></ToolButton>
        <ToolLine />
        <ToolButton aria-label="User rights"><IconUserKey /></ToolButton>
        <ToolButton aria-label="Users"><IconUsers /></ToolButton>
        <ToolLine />
        <ToolButton aria-label="About"><IconInfo /></ToolButton>
        <Spacer />
        <IconButton aria-label="More tools"><IconCircleArrow /></IconButton>
      </ToolBar>

      <Body>
        <SideMenu />
        <Content>
          <ToolBar $compact>
            <Grip $after={2} />
            <ToolButton><IconReport />Reports<IconCaret /></ToolButton>
            <ToolButton><IconAction />Actions<IconCaret /></ToolButton>
            <ToolLine />
            <ToolButton aria-label="Reminders"><IconAlarm /></ToolButton>
            <Spacer />
            <IconButton aria-label="More actions"><IconCircleArrow /></IconButton>
          </ToolBar>
          <OrdersGrid />
          <Splitter />
          <TabStrip role="tablist">
            {detailTabs.map((name) => (
              <Tab key={name} role="tab" aria-selected={tab === name} $active={tab === name} onClick={() => setTab(name)}>
                <IconSmallBook />
                {name}
              </Tab>
            ))}
          </TabStrip>
          <DetailPanel>
            <DetailInner>
              <PassengersGrid />
            </DetailInner>
          </DetailPanel>
        </Content>
      </Body>

      <DockStrip>
        <DockTab>
          <IconBook />
          Orders
          <IconButton aria-label="Close Orders"><IconClose color="#0a94d6" /></IconButton>
        </DockTab>
        <DockLine />
      </DockStrip>

      <StatusBar>
        <StatusItem $pad={5}><IconInfoDot />7.2.9152.10 Standard</StatusItem>
        <StatusItem $pad={8}><IconDatabase />localhost (utf8)</StatusItem>
        <StatusItem $pad={18}><IconPerson />NIKOLAY (MAIN)</StatusItem>
        <StatusItem $pad={9}><IconCalendar />15.10.2024</StatusItem>
        <StatusItem $pad={28}>00:00:00:117</StatusItem>
        <span />
        <SizeGrip>
          <svg width="11" height="11" viewBox="0 0 11 11" aria-hidden="true">
            <path d="M8 0h2v2h-2zM4 4h2v2h-2zM8 4h2v2h-2zM0 8h2v2h-2zM4 8h2v2h-2zM8 8h2v2h-2z" fill="#777" />
          </svg>
        </SizeGrip>
      </StatusBar>
    </AppWindow>
  );
};

export default App;
